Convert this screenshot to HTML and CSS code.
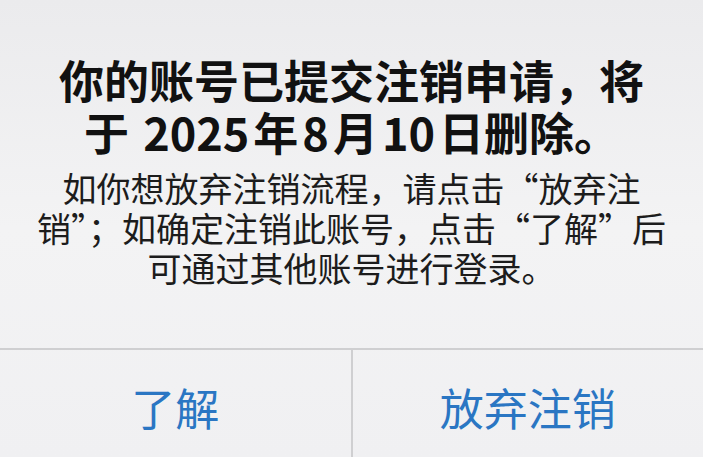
FILE: index.html
```html
<!DOCTYPE html>
<html lang="zh-CN">
<head>
<meta charset="utf-8">
<link rel="stylesheet" href="styles.css">
</head>
<body>
<div class="alert">
  <div class="content">
    <div class="title">你的账号已提交注销申请，将<br>于 <span class="num">2025</span>年<span class="num">8</span>月<span class="num">10</span>日删除。</div>
    <div class="message">如你想放弃注销流程，请点击“放弃注<br>销”；如确定注销此账号，点击“了解”后<br>可通过其他账号进行登录。</div>
  </div>
  <div class="actions">
    <div class="btn">了解</div>
    <div class="btn btn-right">放弃注销</div>
  </div>
</div>
</body>
</html>
```
FILE: styles.css
```css
html, body {
  margin: 0;
  padding: 0;
}
body {
  width: 703px;
  height: 457px;
  overflow: hidden;
  background: #eeeef0;
  font-family: "Noto Sans CJK SC", "Noto Sans", sans-serif;
}
.alert {
  height: 457px;
  display: flex;
  flex-direction: column;
  background: linear-gradient(180deg, #ebebed 0%, #f3f3f4 50%, #f0f0f2 100%);
}
.content {
  flex: 0 0 348px;
  box-sizing: border-box;
  padding-top: 54px;
  text-align: center;
}
.title {
  font-size: 45px;
  line-height: 52px;
  font-weight: 700;
  color: #111;
}
.num {
  margin: 0 4px;
}
.message {
  margin-top: 10px;
  font-size: 34px;
  line-height: 40px;
  color: #1c1c1c;
}
.actions {
  flex: 1;
  display: flex;
  border-top: 2px solid #cfcfd1;
}
.btn {
  flex: 1;
  display: flex;
  align-items: center;
  justify-content: center;
  padding-top: 6px;
  font-size: 44px;
  color: #2a76c3;
}
.btn-right {
  border-left: 2px solid #cfcfd1;
}
```
